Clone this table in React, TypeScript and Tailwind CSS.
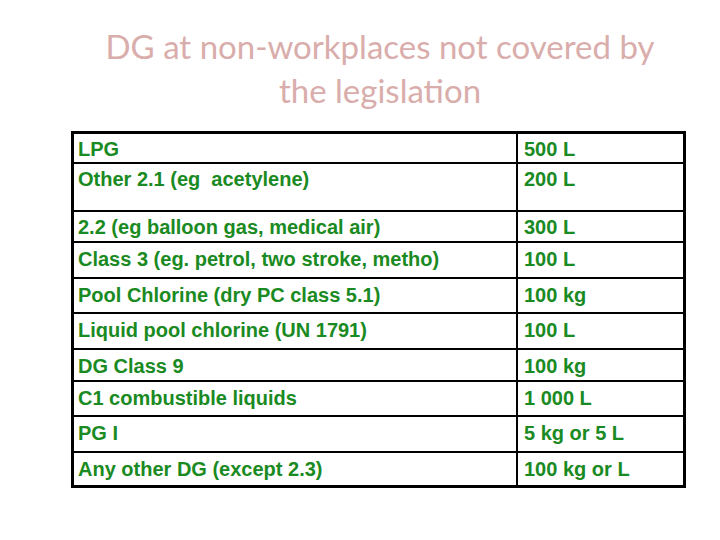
import React from "react";

const rows: { left: string; right: string; h: string; pt: string; first?: boolean }[] = [
  { left: "LPG", right: "500 L", h: "h-[28px]", pt: "pt-[3px]", first: true },
  { left: "Other 2.1 (eg  acetylene)", right: "200 L", h: "h-[48px]", pt: "pt-[3px]" },
  { left: "2.2 (eg balloon gas, medical air)", right: "300 L", h: "h-[31px]", pt: "pt-[3px]" },
  { left: "Class 3 (eg. petrol, two stroke, metho)", right: "100 L", h: "h-[36px]", pt: "pt-[4px]" },
  { left: "Pool Chlorine (dry PC class 5.1)", right: "100 kg", h: "h-[35px]", pt: "pt-[4px]" },
  { left: "Liquid pool chlorine (UN 1791)", right: "100 L", h: "h-[36px]", pt: "pt-[4px]" },
  { left: "DG Class 9", right: "100 kg", h: "h-[32px]", pt: "pt-[4px]" },
  { left: "C1 combustible liquids", right: "1 000 L", h: "h-[35px]", pt: "pt-[4px]" },
  { left: "PG I", right: "5 kg or 5 L", h: "h-[36px]", pt: "pt-[4px]" },
  { left: "Any other DG (except 2.3)", right: "100 kg or L", h: "h-[34px]", pt: "pt-[4px]" },
];

export default function App() {
  return (
    <div className="w-[720px] h-[540px] bg-white overflow-hidden">
      <div
        className="pt-[24px] pl-[78px] pr-[38px] text-center text-[33px] leading-[44px] text-[#d9adab]"
        style={{ fontFamily: "Lato, 'Noto Sans', sans-serif" }}
      >
        <div>DG at non-workplaces not covered by</div>
        <div>the legislation</div>
      </div>
      <div
        className="ml-[71px] mt-[19px] w-[615px] border-[3px] border-black font-bold text-[20px] leading-[24px] text-[#1a8a22]"
        style={{ fontFamily: "'Liberation Sans', Arial, sans-serif" }}
      >
        {rows.map((r, i) => (
          <div key={i} className={`flex ${r.h} ${r.first ? "" : "border-t-2 border-black"}`}>
            <div className={`w-[442px] pl-[4px] whitespace-pre ${r.pt}`}>{r.left}</div>
            <div className={`flex-1 border-l-2 border-black pl-[6px] whitespace-pre ${r.pt}`}>{r.right}</div>
          </div>
        ))}
      </div>
    </div>
  );
}
